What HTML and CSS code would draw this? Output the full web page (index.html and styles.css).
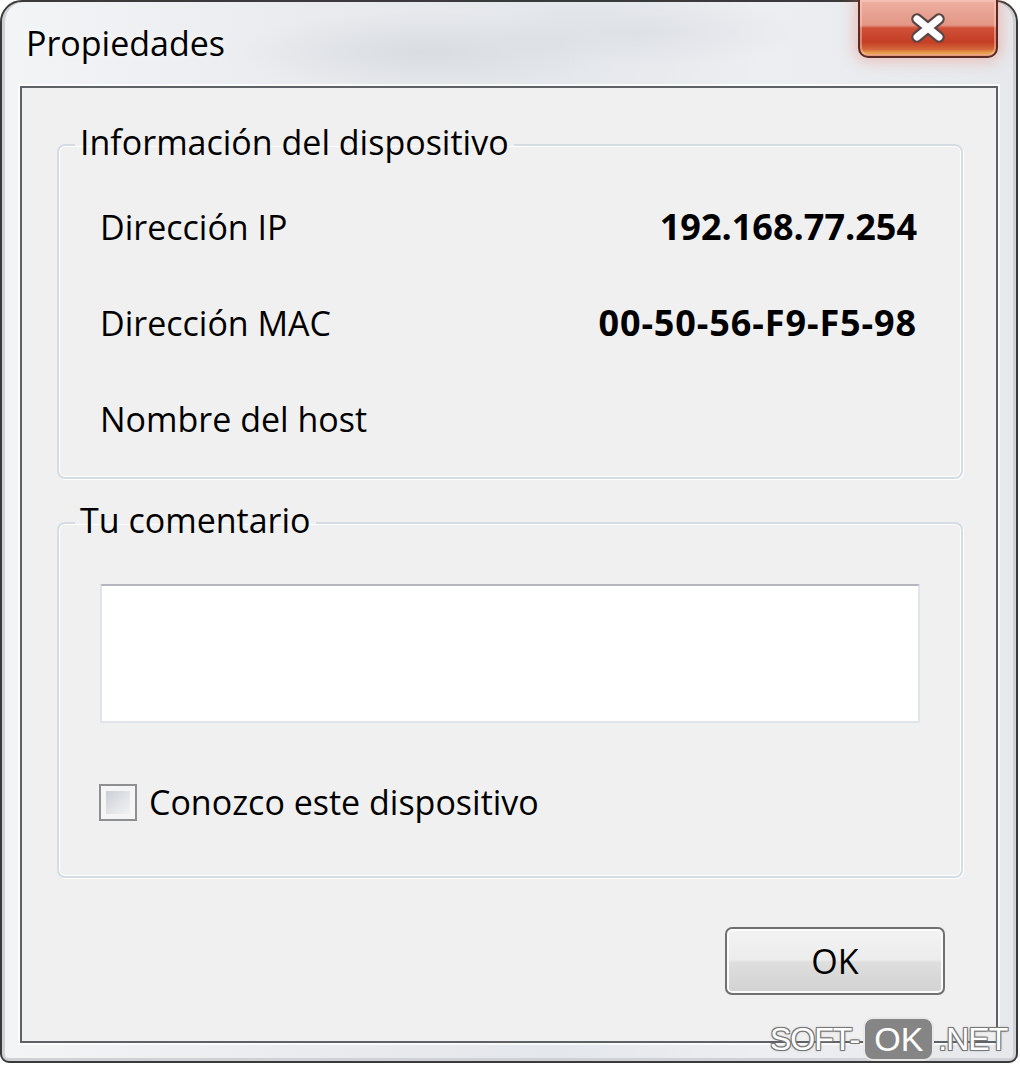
FILE: index.html
```html
<!DOCTYPE html>
<html lang="es">
<head>
<meta charset="utf-8">
<title>Propiedades</title>
<link rel="stylesheet" href="styles.css">
</head>
<body>
<div class="window">
  <div class="titlebar">
    <span class="title">Propiedades</span>
    <button class="close" aria-label="Cerrar">
      <svg width="40" height="30" viewBox="0 0 40 30">
        <path d="M9 6 L31 24 M31 6 L9 24" stroke="#5b4646" stroke-width="11.5" stroke-linecap="round" fill="none"/>
        <path d="M9 6 L31 24 M31 6 L9 24" stroke="#ffffff" stroke-width="7" stroke-linecap="round" fill="none"/>
      </svg>
    </button>
  </div>
  <div class="client">
    <fieldset class="group group-info">
      <legend>Información del dispositivo</legend>
      <div class="rows">
        <div class="row"><span>Dirección IP</span><span class="value">192.168.77.254</span></div>
        <div class="row"><span>Dirección MAC</span><span class="value value-mac">00-50-56-F9-F5-98</span></div>
        <div class="row"><span>Nombre del host</span><span class="value"></span></div>
      </div>
    </fieldset>
    <fieldset class="group group-comment">
      <legend>Tu comentario</legend>
      <div class="comment-body">
        <div class="textbox"></div>
        <label class="check"><span class="box"></span><span>Conozco este dispositivo</span></label>
      </div>
    </fieldset>
    <div class="actions"><button class="ok">OK</button></div>
  </div>
  <div class="watermark"><span class="wm-text">SOFT-</span><span class="wm-ok">OK</span><span class="wm-text">.NET</span></div>
</div>
</body>
</html>
```
FILE: styles.css
```css
* { box-sizing: border-box; }
html, body { margin: 0; padding: 0; }
body {
  background: #ffffff;
  width: 1020px;
  height: 1065px;
  overflow: hidden;
  font-family: "Open Sans", "Noto Sans", sans-serif;
  font-size: 34px;
  line-height: 40px;
  color: #000;
}
.window {
  position: relative;
  width: 1018px;
  height: 1063px;
  border: 2px solid #3a3a3a;
  border-radius: 22px 22px 9px 9px;
  background:
    radial-gradient(ellipse 180px 40px at 420px 50px, rgba(190,196,204,0.35), rgba(190,196,204,0) 100%),
    radial-gradient(ellipse 160px 35px at 640px 30px, rgba(200,205,212,0.3), rgba(200,205,212,0) 100%),
    linear-gradient(to right, #f3f4f6 0%, #e9ebee 30%, #e4e7eb 55%, #eceef1 75%, #e6e8ec 100%);
  box-shadow: inset 3px 0 0 #cfd1d4, inset -3px 0 0 #cfd1d4, inset 0 -3px 0 #cfd1d4;
  display: flex;
  flex-direction: column;
}
.titlebar {
  height: 84px;
  display: flex;
  justify-content: space-between;
  align-items: flex-start;
  padding-left: 24px;
  flex: none;
}
.title {
  margin-top: 21px;
  text-shadow: 0 0 8px rgba(255,255,255,0.9);
}
.close {
  margin-top: -2px;
  margin-right: 18px;
  width: 140px;
  height: 58px;
  padding: 0;
  border: 2px solid #5c2a22;
  border-top: none;
  border-radius: 0 0 10px 10px;
  background: linear-gradient(to bottom, #eeb0a2 0%, #e39684 45%, #cf5038 50%, #c43e24 75%, #d4663a 88%, #eaa650 95%, #c85a34 100%);
  box-shadow: inset 0 0 0 2px rgba(255,210,200,0.45), 0 0 14px 4px rgba(235,120,100,0.35);
  display: flex;
  align-items: center;
  justify-content: center;
}
.close svg { display: block; }
.client {
  margin: 0 18px;
  height: 957px;
  flex: none;
  border: 2px solid #5e6165;
  background: #f0f0f0;
  box-shadow: 0 0 0 2px rgba(255,255,255,0.75);
  padding: 33px 33px 0 35px;
  display: flex;
  flex-direction: column;
}
.group {
  margin: 0;
  padding: 0;
  min-width: 0;
  border: 2px solid #d5dde4;
  border-radius: 8px;
  box-shadow: inset 0 0 0 1px #ffffff, 1px 1px 0 #ffffff;
}
.group legend {
  margin-left: 16px;
  padding: 0 5px 6px 5px;
  line-height: 42px;
}
.rows {
  display: flex;
  flex-direction: column;
  gap: 56px;
  padding: 38px 44px 38px 41px;
}
.row {
  display: flex;
  justify-content: space-between;
  height: 40px;
}
.value {
  font-weight: 700;
  font-size: 36px;
}
.value-mac { letter-spacing: 0.9px; }
.group-comment {
  margin-top: 20px;
}
.comment-body {
  padding: 37px 41px 54px 41px;
}
.textbox {
  height: 139px;
  background: #fff;
  border: 2px solid #dfe5eb;
  border-top-color: #b3b7bd;
  border-radius: 2px;
}
.check {
  margin-top: 59px;
  display: flex;
  align-items: center;
  gap: 12px;
  height: 40px;
  margin-left: -1px;
}
.box {
  width: 38px;
  height: 37px;
  border: 2px solid #8e8f90;
  background: linear-gradient(135deg, #c2c6cc 0%, #e3e5e8 55%, #f8f8f8 100%);
  box-shadow: inset 0 0 0 5px #f5f5f5;
}
.actions {
  margin-top: 49px;
  display: flex;
  justify-content: flex-end;
  padding-right: 18px;
}
.ok {
  width: 220px;
  height: 68px;
  border: 2px solid #707070;
  border-radius: 7px;
  background: linear-gradient(to bottom, #f3f3f3 0%, #ececec 48%, #dedede 52%, #d2d2d2 100%);
  box-shadow: inset 0 0 0 2px #fbfbfb;
  font-family: "Open Sans", "Noto Sans", sans-serif;
  font-size: 34px;
  line-height: 40px;
  color: #000;
  padding: 0;
}
.watermark {
  position: absolute;
  left: 768px;
  top: 1015px;
  display: flex;
  align-items: center;
  font-family: "Liberation Sans", Arial, sans-serif;
  font-size: 32px;
  line-height: 40px;
  letter-spacing: -1px;
  color: #fff;
}
.wm-text {
  text-shadow: 1px 1px 0 #777, -1px -1px 0 #777, 1px -1px 0 #777, -1px 1px 0 #777, 0 0 3px #888;
}
.wm-ok {
  margin: 0 4px;
  padding: 0 9px;
  height: 44px;
  display: flex;
  align-items: center;
  background: #858585;
  border: 2px solid #e8e8e8;
  border-radius: 10px;
  letter-spacing: 0;
  font-size: 34px;
}
```
